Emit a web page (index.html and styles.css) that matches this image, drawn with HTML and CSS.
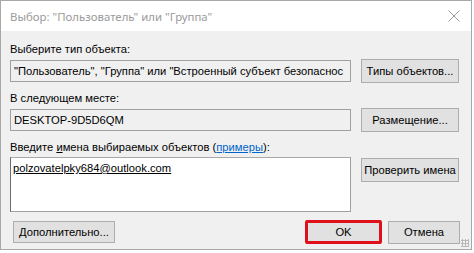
FILE: index.html
```html
<!DOCTYPE html>
<html lang="ru">
<head>
<meta charset="utf-8">
<title>Выбор</title>
<link rel="stylesheet" href="styles.css">
</head>
<body>
<div class="window">
  <div class="titlebar">
    <span class="title">Выбор: "Пользователь" или "Группа"</span>
    <svg class="close" width="12" height="12" viewBox="0 0 12 12"><path d="M0.5 0.5 L11.5 11.5 M11.5 0.5 L0.5 11.5" stroke="#9a9a9a" stroke-width="1" fill="none"/></svg>
  </div>
  <div class="content">
    <div class="label first">Выберите тип объекта:</div>
    <div class="row">
      <div class="field">"Пользователь", "Группа" или "Встроенный субъект безопаснос</div>
      <div class="btn">Типы объектов...</div>
    </div>
    <div class="label">В следующем месте:</div>
    <div class="row">
      <div class="field">DESKTOP-9D5D6QM</div>
      <div class="btn">Размещение...</div>
    </div>
    <div class="label">Введите <u>и</u>мена выбираемых объектов (<a class="link">примеры</a>):</div>
    <div class="row top">
      <div class="area"><u>polzovatelpky684@outlook.com</u></div>
      <div class="btn">Проверить имена</div>
    </div>
    <div class="footer">
      <div class="btn more">Дополнительно...</div>
      <div class="actions">
        <div class="ok-wrap"><div class="btn ok">OK</div></div>
        <div class="btn cancel">Отмена</div>
      </div>
    </div>
  </div>
  <div class="grip"></div>
</div>
</body>
</html>
```

FILE: styles.css
```css
html, body {
  margin: 0;
  padding: 0;
}
body {
  width: 474px;
  height: 253px;
  background: #ffffff;
  font-family: "Liberation Sans", Arial, sans-serif;
  font-size: 11.2px;
  color: #000;
  overflow: hidden;
}
.window {
  position: relative;
  width: 472px;
  height: 250px;
  box-sizing: border-box;
  border: 1px solid #a8a8a8;
  background: #f0f0f0;
  display: flex;
  flex-direction: column;
}
.titlebar {
  height: 30px;
  background: #fff;
  display: flex;
  align-items: center;
  justify-content: space-between;
  padding: 0 10px 0 9px;
}
.title {
  font-family: "Noto Sans", "Open Sans", sans-serif;
  font-size: 11.4px;
  color: #9b9b9b;
}
.close {
  margin-right: 1px;
}
.content {
  padding: 0 0 0 9px;
  display: flex;
  flex-direction: column;
}
.label {
  height: 16px;
  line-height: 16px;
  margin-top: 7px;
}
.label.first {
  margin-top: 10px;
}
.link {
  color: #0066cc;
  text-decoration: underline;
}
.row {
  display: grid;
  grid-template-columns: 341px 98px;
  column-gap: 10px;
  align-items: center;
  margin-top: 2px;
}
.row.top {
  align-items: start;
}
.field {
  height: 22px;
  box-sizing: border-box;
  border: 1px solid #a0a0a0;
  background: #f0f0f0;
  padding: 0 3px;
  line-height: 20px;
  white-space: nowrap;
  overflow: hidden;
}
.area {
  height: 55px;
  box-sizing: border-box;
  border: 1px solid #a0a0a0;
  border-top-color: #a8a8a8;
  border-left-color: #6e6e6e;
  background: #fff;
  padding: 2px 2px;
  line-height: 16px;
}
.btn {
  height: 24px;
  box-sizing: border-box;
  border: 1px solid #adadad;
  background: #e1e1e1;
  display: flex;
  align-items: center;
  justify-content: center;
  white-space: nowrap;
}
.row.top .btn {
  margin-top: 1px;
}
.footer {
  display: flex;
  justify-content: space-between;
  align-items: center;
  margin-top: 8px;
  padding-right: 11px;
}
.more {
  width: 102px;
  height: 22px;
  margin-left: 3px;
}
.actions {
  display: flex;
  align-items: center;
  gap: 6px;
}
.ok-wrap {
  border: 3px solid #e0101a;
  border-radius: 2px;
  width: 77px;
  height: 24px;
  box-sizing: border-box;
  display: flex;
}
.ok {
  border: none;
  flex: 1;
  height: auto;
}
.cancel {
  width: 72px;
  height: 23px;
}
.grip {
  position: absolute;
  right: 2px;
  bottom: 2px;
  width: 8px;
  height: 8px;
  background-image: radial-gradient(circle, #b8b8b8 1px, transparent 1.2px);
  background-size: 3px 3px;
}
```
